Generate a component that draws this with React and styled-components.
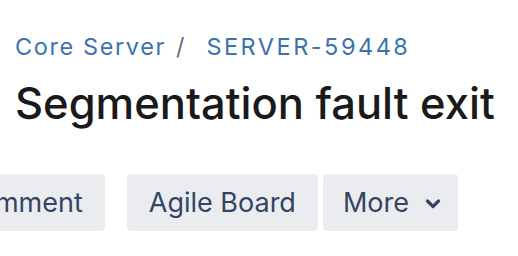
import styled, { createGlobalStyle } from 'styled-components';

const GlobalStyle = createGlobalStyle`
    html, body {
        margin: 0;
        padding: 0;
        background: #fff;
    }
    body {
        font-family: Inter, "Noto Sans", sans-serif;
    }
`

export default function App() {
    return (
        <Page>
            <GlobalStyle />
            <Breadcrumbs>
                <Crumb href="#" $spacing="1.6px">Core Server</Crumb>
                <Separator>/</Separator>
                <Crumb href="#" $spacing="2.5px">SERVER-59448</Crumb>
            </Breadcrumbs>
            <Title>Segmentation fault exit</Title>
            <ToolbarClip>
                <Toolbar>
                    <ButtonGroup>
                        <ToolButton>Comment</ToolButton>
                    </ButtonGroup>
                    <ButtonGroup>
                        <ToolButton>Agile Board</ToolButton>
                        <ToolButton $dropdown>
                            More
                            <Chevron viewBox="0 0 16 16">
                                <path d="M2.5 5 L8 10.5 L13.5 5" fill="none" stroke="currentColor" strokeWidth="3.2" strokeLinecap="round" strokeLinejoin="round" />
                            </Chevron>
                        </ToolButton>
                    </ButtonGroup>
                </Toolbar>
            </ToolbarClip>
        </Page>
    )
}

const Page = styled.div`
    width: 518px;
    height: 256px;
    overflow: hidden;
    padding: 32px 0 0 15px;
    box-sizing: border-box;
`
const Breadcrumbs = styled.nav`
    display: flex;
    align-items: baseline;
    font-size: 23.5px;
    line-height: 30px;
    color: #5e6c84;
`
const Crumb = styled.a`
    color: #3b73af;
    text-decoration: none;
    letter-spacing: ${p => p.$spacing};
`
const Separator = styled.span`
    margin: 0 22px 0 10px;
    color: #5e6c84;
`
const Title = styled.h1`
    margin: 15px 0 0;
    font-size: 43.5px;
    font-weight: 500;
    line-height: 52px;
    color: #1a1a1a;
    white-space: nowrap;
`
const ToolbarClip = styled.div`
    margin: 45px 0 0 -15px;
    overflow: hidden;
`
const Toolbar = styled.div`
    display: flex;
    gap: 22px;
    margin-left: -63px;
`
const ButtonGroup = styled.div`
    display: flex;
    gap: 5px;
`
const ToolButton = styled.button`
    display: flex;
    align-items: center;
    gap: 16px;
    height: 57px;
    padding: 0 ${p => p.$dropdown ? '17px' : '22px'} 0 ${p => p.$dropdown ? '20px' : '22px'};
    border: none;
    border-radius: 4px;
    background: #ebecf0;
    color: #344563;
    font-family: Inter, "Noto Sans", sans-serif;
    font-size: 27px;
    white-space: nowrap;
    flex-shrink: 0;
`
const Chevron = styled.svg`
    width: 16px;
    height: 16px;
    flex-shrink: 0;
    margin-top: 2px;
`
